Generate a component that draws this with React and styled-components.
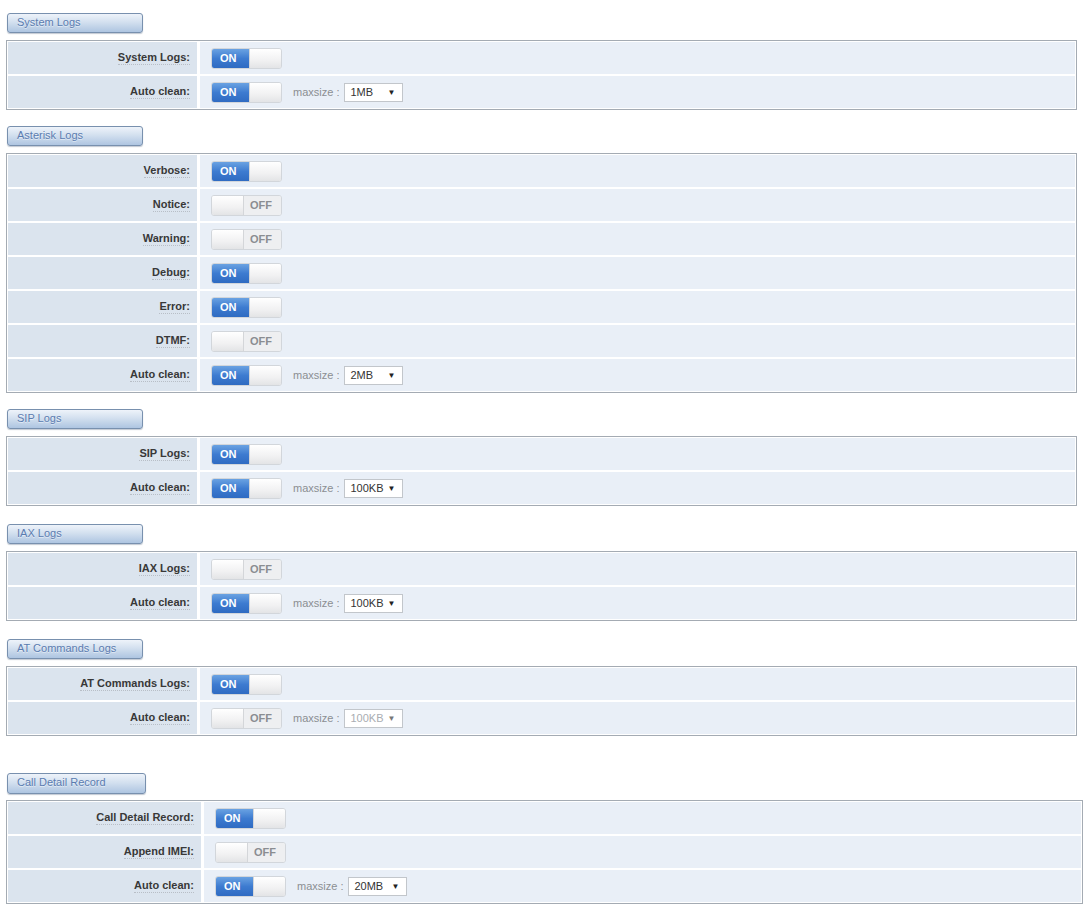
import React from 'react';
import styled, { createGlobalStyle } from 'styled-components';

const GlobalStyle = createGlobalStyle`
  body {
    margin: 0;
    background: #ffffff;
    font-family: "Liberation Sans", Arial, sans-serif;
  }
`;

const Page = styled.div`
  padding: 13px 0 0 6px;
  width: 1072px;
`;

const Section = styled.section`
  margin-top: ${(p) => p.$top || 0}px;
  width: ${(p) => (p.$wide ? 1077 : 1071)}px;
`;

const Tab = styled.div`
  width: ${(p) => (p.$wide ? 139 : 136)}px;
  height: ${(p) => (p.$wide ? 21 : 20)}px;
  margin-left: 1px;
  margin-bottom: ${(p) => (p.$wide ? 6 : 7)}px;
  box-sizing: border-box;
  border: 1px solid #7890ae;
  border-radius: 3px;
  background: linear-gradient(to bottom, #eef3fa 0%, #d3e0ef 45%, #aec5e1 100%);
  box-shadow: 0 1px 1px rgba(80, 100, 130, 0.35);
  color: #5b7cb0;
  font-size: 11px;
  line-height: 17px;
  padding-left: 9px;
  text-shadow: 0 1px 0 rgba(255, 255, 255, 0.5);
`;

const Table = styled.div`
  display: grid;
  grid-template-columns: ${(p) => (p.$wide ? 193 : 189)}px 1fr;
  column-gap: 3px;
  row-gap: 2px;
  border: 1px solid #a4abb3;
  padding: 1px;
  background: #ffffff;
`;

const LabelCell = styled.div`
  height: 32px;
  background: #dbe4ee;
  display: flex;
  align-items: center;
  justify-content: flex-end;
  padding-right: 7px;
`;

const Label = styled.span`
  font-size: 11px;
  font-weight: bold;
  color: #383838;
  border-bottom: 1px dotted #b8bec6;
  line-height: 13px;
`;

const ValueCell = styled.div`
  height: 32px;
  background: #e9eff7;
  display: flex;
  align-items: center;
  padding-left: 11px;
`;

const Switch = styled.div`
  width: 71px;
  height: 21px;
  box-sizing: border-box;
  display: flex;
  border-radius: 3px;
  overflow: hidden;
  border: 1px solid #d2d6db;
  background: #f3f4f6;
`;

const OnPart = styled.div`
  width: 37px;
  background: linear-gradient(to bottom, #6aa2e2 0%, #3d7bd0 50%, #2f6bc2 100%);
  color: #ffffff;
  font-size: 11px;
  font-weight: bold;
  line-height: 19px;
  padding-left: 8px;
  box-sizing: border-box;
`;

const OffPart = styled.div`
  flex: 1;
  background: #eeeff1;
  color: #8a8d91;
  font-size: 11px;
  font-weight: bold;
  line-height: 19px;
  padding-left: 6px;
`;

const Knob = styled.div`
  width: ${(p) => (p.$left ? 32 : 33)}px;
  background: linear-gradient(to bottom, #ffffff 0%, #f1f1f2 60%, #e3e4e6 100%);
  border-left: ${(p) => (p.$left ? 'none' : '1px solid #d4d6d9')};
  border-right: ${(p) => (p.$left ? '1px solid #d4d6d9' : 'none')};
  box-sizing: border-box;
`;

const Maxsize = styled.span`
  margin-left: 11px;
  font-size: 11px;
  color: #8b8e92;
`;

const Select = styled.div`
  margin-left: 5px;
  width: 59px;
  height: 19px;
  box-sizing: border-box;
  border: 1px solid #c2c6cb;
  background: #ffffff;
  display: flex;
  align-items: center;
  justify-content: space-between;
  padding: 0 7px 0 5px;
  font-size: 11px;
  color: ${(p) => (p.$disabled ? '#a9adb2' : '#333333')};
`;

const Arrow = styled.span`
  font-size: 8px;
  color: ${(p) => (p.$disabled ? '#777' : '#222')};
`;

const Toggle = ({ on }) => (
  <Switch>
    {on ? (
      <>
        <OnPart>ON</OnPart>
        <Knob />
      </>
    ) : (
      <>
        <Knob $left />
        <OffPart>OFF</OffPart>
      </>
    )}
  </Switch>
);

const sections = [
  {
    title: 'System Logs',
    top: 0,
    rows: [
      { label: 'System Logs:', on: true },
      { label: 'Auto clean:', on: true, size: '1MB' },
    ],
  },
  {
    title: 'Asterisk Logs',
    top: 16,
    rows: [
      { label: 'Verbose:', on: true },
      { label: 'Notice:', on: false },
      { label: 'Warning:', on: false },
      { label: 'Debug:', on: true },
      { label: 'Error:', on: true },
      { label: 'DTMF:', on: false },
      { label: 'Auto clean:', on: true, size: '2MB' },
    ],
  },
  {
    title: 'SIP Logs',
    top: 16,
    rows: [
      { label: 'SIP Logs:', on: true },
      { label: 'Auto clean:', on: true, size: '100KB' },
    ],
  },
  {
    title: 'IAX Logs',
    top: 18,
    rows: [
      { label: 'IAX Logs:', on: false },
      { label: 'Auto clean:', on: true, size: '100KB' },
    ],
  },
  {
    title: 'AT Commands Logs',
    top: 18,
    rows: [
      { label: 'AT Commands Logs:', on: true },
      { label: 'Auto clean:', on: false, size: '100KB' },
    ],
  },
  {
    title: 'Call Detail Record',
    wide: true,
    top: 37,
    rows: [
      { label: 'Call Detail Record:', on: true },
      { label: 'Append IMEI:', on: false },
      { label: 'Auto clean:', on: true, size: '20MB' },
    ],
  },
];

const App = () => (
  <>
    <GlobalStyle />
    <Page>
      {sections.map((s) => (
        <Section key={s.title} $wide={s.wide} $top={s.top}>
          <Tab $wide={s.wide}>{s.title}</Tab>
          <Table $wide={s.wide}>
            {s.rows.map((r, i) => (
              <React.Fragment key={i}>
                <LabelCell>
                  <Label>{r.label}</Label>
                </LabelCell>
                <ValueCell>
                  <Toggle on={r.on} />
                  {r.size && (
                    <>
                      <Maxsize>maxsize :</Maxsize>
                      <Select $disabled={!r.on}>
                        {r.size}
                        <Arrow $disabled={!r.on}>▼</Arrow>
                      </Select>
                    </>
                  )}
                </ValueCell>
              </React.Fragment>
            ))}
          </Table>
        </Section>
      ))}
    </Page>
  </>
);

export default App;
